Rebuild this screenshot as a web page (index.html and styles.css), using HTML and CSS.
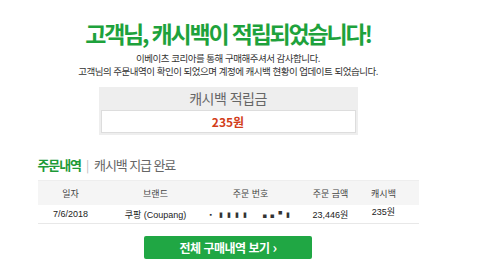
FILE: index.html
```html
<!DOCTYPE html>
<html lang="ko">
<head>
    <meta charset="UTF-8">
    <title>캐시백 적립 안내</title>
    <link rel="stylesheet" href="styles.css">
</head>
<body>
    <div class="page">
        <h1 class="title">고객님, 캐시백이 적립되었습니다!</h1>
        <p class="intro">이베이츠 코리아를 통해 구매해주셔서 감사합니다.<br>고객님의 주문내역이 확인이 되었으며 계정에 캐시백 현황이 업데이트 되었습니다.</p>

        <div class="cashback-box">
            <div class="cashback-label">캐시백 적립금</div>
            <div class="cashback-amount">235원</div>
        </div>

        <div class="orders">
            <h2 class="orders-title"><span class="green">주문내역</span><span class="bar">|</span>캐시백 지급 완료</h2>
            <table class="orders-table">
                <tr class="head">
                    <td class="c1">일자</td>
                    <td class="c2">브랜드</td>
                    <td class="c3">주문 번호</td>
                    <td class="c4">주문 금액</td>
                    <td class="c5">캐시백</td>
                    <td class="c6"></td>
                </tr>
                <tr>
                    <td class="c1">7/6/2018</td>
                    <td class="c2">쿠팡 (Coupang)</td>
                    <td class="c3"><span class="masked">▪&nbsp;&nbsp;▮ ▮ ▮ ▮&nbsp;&nbsp;&nbsp;&nbsp;▗ ▖▘▮</span></td>
                    <td class="c4">23,446원</td>
                    <td class="c5 up">235원</td>
                    <td class="c6"></td>
                </tr>
            </table>
        </div>

        <a class="all-button" href="#">전체 구매내역 보기 <span class="arrow">›</span></a>
    </div>
</body>
</html>
```

FILE: styles.css
```css
html, body {
    margin: 0;
    padding: 0;
    background: #fff;
}

body {
    font-family: "Noto Sans CJK KR", "Noto Sans", sans-serif;
    color: #333;
}

/* contenu centré sur 456px, comme la page d'origine */
.page {
    width: 456px;
    display: flex;
    flex-direction: column;
    align-items: center;
}

.title {
    margin: 18px 0 0;
    font-size: 23px;
    font-weight: 700;
    letter-spacing: -2.2px;
    line-height: 30px;
    color: #1ea23c;
}

.intro {
    margin: 4px 0 0;
    font-size: 9.5px;
    line-height: 13px;
    letter-spacing: -0.5px;
    text-align: center;
    color: #333;
}

.cashback-box {
    margin-top: 9px;
    width: 255px;
    padding: 0 2px 2px;
    background: #eee;
}

.cashback-label {
    height: 23px;
    line-height: 23px;
    text-align: center;
    font-size: 14px;
    color: #666;
    letter-spacing: -0.5px;
}

.cashback-amount {
    height: 21px;
    line-height: 21px;
    background: #fff;
    border: 1px solid #ddd;
    text-align: center;
    font-size: 12px;
    font-weight: 700;
    color: #d23e1a;
}

.orders {
    margin-top: 21px;
    width: 381px;
}

.orders-title {
    margin: 0 0 6px;
    font-size: 13px;
    font-weight: 400;
    line-height: 18px;
    color: #666;
    letter-spacing: -1.1px;
}

.orders-title .green {
    color: #1e9a38;
    font-weight: 700;
}

.orders-title .bar {
    color: #bbb;
    margin: 0 6px 0 5px;
    font-size: 12px;
}

.orders-table {
    width: 100%;
    border-collapse: collapse;
    font-family: "Liberation Sans", "Noto Sans CJK KR", sans-serif;
    font-size: 9px;
    color: #222;
}

.orders-table td {
    text-align: center;
    padding: 0;
}

.orders-table .head td {
    background: #f5f5f5;
    border-top: 1px solid #eee;
    height: 24px;
    font-family: "Noto Sans CJK KR", sans-serif;
    color: #444;
}

.orders-table tr:last-child td {
    height: 18px;
    border-bottom: 1px solid #e8e8e8;
}

.c1 { width: 66px; }
.c2 { width: 104px; }
.c3 { width: 86px; }
.c4 { width: 74px; }
.c5 { width: 32px; }
.c6 { width: 19px; }

.up {
    vertical-align: top;
}

.masked {
    font-size: 7px;
    color: #333;
    letter-spacing: 1px;
}

.all-button {
    margin-top: 12px;
    width: 168px;
    height: 23px;
    line-height: 23px;
    background: #20a744;
    border-radius: 2px;
    color: #fff;
    text-decoration: none;
    text-align: center;
    font-size: 12px;
    font-weight: 700;
    letter-spacing: -0.5px;
}

.arrow {
    font-size: 14px;
}
```
